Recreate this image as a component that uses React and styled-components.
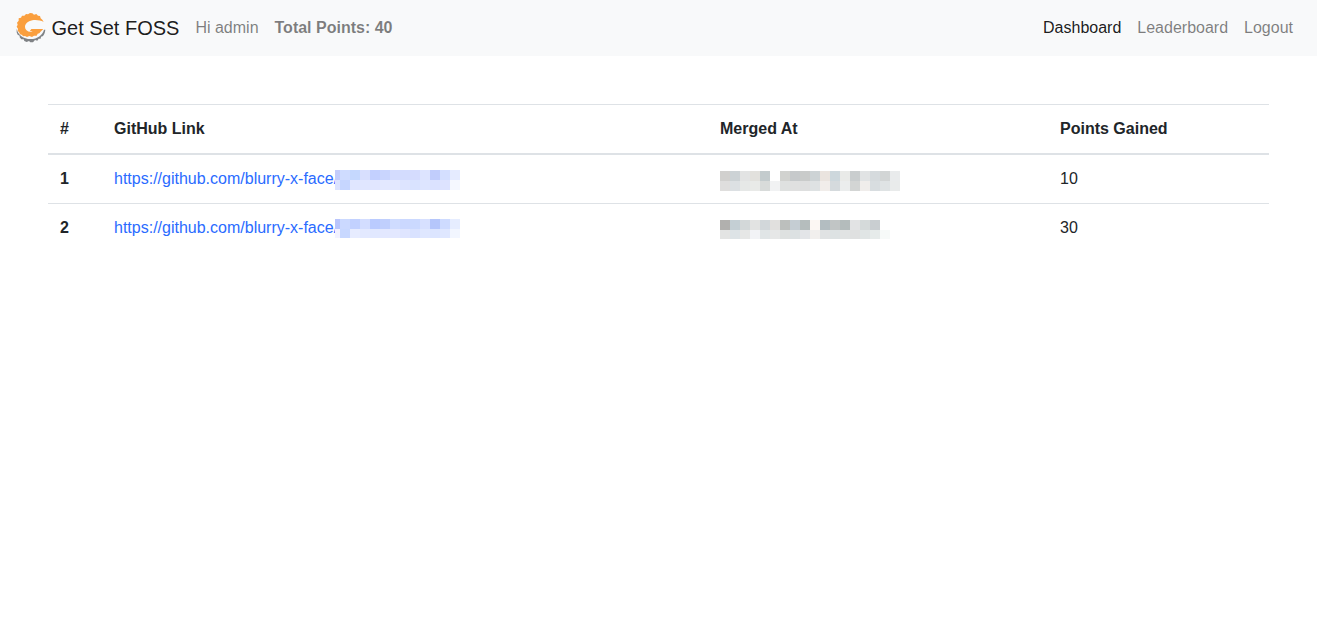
import React from "react";
import styled, { createGlobalStyle } from "styled-components";

const GlobalStyle = createGlobalStyle`
  *, *::before, *::after { box-sizing: border-box; }
  body {
    margin: 0;
    background: #fff;
    color: #212529;
    font-family: "Liberation Sans", Arial, sans-serif;
    font-size: 16px;
    line-height: 24px;
  }
`;

const Navbar = styled.nav`
  display: flex;
  align-items: center;
  gap: 16px;
  padding: 8px 16px;
  background: #f8f9fa;
`;

const Brand = styled.a`
  display: block;
  padding: 5px 0;
  font-size: 20px;
  line-height: 30px;
  color: rgba(0, 0, 0, 0.9);
  text-decoration: none;
  white-space: nowrap;
`;

const LogoMark = styled.svg`
  display: inline-block;
  vertical-align: top;
`;

const Greeting = styled.span`
  color: rgba(0, 0, 0, 0.5);
  font-weight: ${(p) => (p.$strong ? 700 : 400)};
  white-space: nowrap;
`;

const NavList = styled.ul`
  display: flex;
  margin: 0 0 0 auto;
  padding: 0;
  list-style: none;
`;

const NavLink = styled.a`
  display: block;
  padding: 8px;
  color: ${(p) => (p.$active ? "rgba(0, 0, 0, 0.9)" : "rgba(0, 0, 0, 0.5)")};
  text-decoration: none;
`;

const Main = styled.main`
  padding: 48px;
`;

const Table = styled.table`
  width: 100%;
  border-collapse: collapse;
  table-layout: fixed;
`;

const Column = styled.col`
  width: ${(p) => p.$width};
`;

const HeadCell = styled.th`
  padding: 12px;
  border-top: 1px solid #dee2e6;
  border-bottom: 2px solid #dee2e6;
  text-align: left;
`;

const RowHead = styled.th`
  padding: 12px;
  border-top: 1px solid #dee2e6;
  text-align: left;
`;

const Cell = styled.td`
  padding: 12px;
  border-top: 1px solid #dee2e6;
`;

const PullLink = styled.a`
  display: flex;
  align-items: flex-start;
  color: #2a6bff;
  text-decoration: none;
`;

const Mosaic = styled.svg`
  display: block;
  flex: none;
  margin-top: 3px;
  margin-left: ${(p) => (p.$overlap ? "-3px" : "0")};
`;

function Logo() {
  return (
    <LogoMark width="30" height="30" viewBox="0 0 90 90" aria-hidden="true">
      <path
        fill="#7f8285"
        d="M2 47 C6 65 22 78 44 78 C64 78 80 66 84 50 L88 50 C87 60 84 66 80 70 L75 71 L74 77 L68 77 L64 83 L57 81 L51 88 L43 88 L39 84 L32 87 L25 84 L23 79 L16 79 L11 73 L11 68 L5 65 L2 58 Z"
      />
      <path
        fill="#fa9f3e"
        d="M83 27 C74 22 60 20 49 22 C35 25 27 33 27 42 C27 50 33 56 45 57 L50 55 L41 55 L46 48 L82 48 L73 57 L70 61 L65 62 L62 68 L54 68 L48 72 L40 69 L33 72 L27 69 L22 70 L17 65 L12 64 L9 57 L5 54 L6 47 L2 41 L5 35 L3 29 L8 23 L8 16 L15 14 L18 8 L25 8 L30 3 L36 4 L42 0 L49 1 L54 5 L61 3 L66 8 L72 9 L74 16 L79 20 Z"
      />
    </LogoMark>
  );
}

function Redacted({ rows, height = 20, start = 10, overlap = false }) {
  const width = start + (rows[0].length - 1) * 10;
  return (
    <Mosaic
      width={width}
      height={height}
      viewBox={`0 0 ${width} ${height}`}
      shapeRendering="crispEdges"
      aria-hidden="true"
      $overlap={overlap}
    >
      {rows.map((row, y) =>
        row.map((fill, x) =>
          fill ? (
            <rect
              key={`${x}-${y}`}
              x={x === 0 ? 0 : start + (x - 1) * 10}
              y={y * 10}
              width={x === 0 ? start : 10}
              height="10"
              fill={fill}
            />
          ) : null
        )
      )}
    </Mosaic>
  );
}

const pulls = [
  {
    start: 5,
    height: 20,
    link: [
      ["#c3ccfb", "#cfdcff", "#c5d8fe", "#d8dffe", "#c3d0ff", "#c9d5fe", "#d4dcfe", "#d3dcfe", "#d5dcfe", "#dde4ff", "#c1cdfc", "#d4dfff", "#e5ebff"],
      ["#dce3ff", "#c6d6ff", "#e0e6ff", "#e0e6ff", "#e1e6ff", "#e3e8ff", "#e3e8ff", "#dde4ff", "#d9e3ff", "#dde5ff", "#dbe2ff", "#dde3ff", "#f5f8ff"],
    ],
    merged: [
      ["#d1d0ce", "#ccd2d5", "#e2e3e3", "#e2e1dd", "#c3cbcd", "#ffffff", "#d1d2cf", "#c6c9cb", "#c9cbca", "#cdd3d5", "#eae4df", "#cdd7dc", "#e9eae8", "#c9cdce", "#e1e3e4", "#d5dadd", "#d2d5d5", "#e9ebec"],
      ["#dfdedd", "#dce0e3", "#e6e8e7", "#e9eae8", "#d8dbda", "#f1f2f3", "#dfe1e0", "#e0e0e0", "#dedfdf", "#dee2e3", "#f1edea", "#d5dadd", "#ebeded", "#d3d5d4", "#f0edeb", "#d8dde0", "#dfe3e4", "#e9ebeb"],
    ],
    points: 10,
  },
  {
    start: 5,
    height: 19,
    link: [
      ["#b9c5fc", "#cbd9ff", "#c2d1ff", "#d3ddff", "#bacbff", "#c0cffd", "#cfdcff", "#cbd8ff", "#cbd9ff", "#d7e0ff", "#b5c6fb", "#cedbff", "#e6edff"],
      ["#f3f2ff", "#c8d8ff", "#e7ecff", "#e3e9ff", "#e1e8ff", "#e3e8ff", "#e3e8ff", "#dfe5ff", "#d9e2ff", "#dfe7ff", "#dce5ff", "#dfe7ff", "#f2f6ff"],
    ],
    merged: [
      ["#b1b0ae", "#c4cfd4", "#d3d8d9", "#e2e3e2", "#d2d7da", "#e1e0de", "#bcbfbd", "#c5cdd3", "#b5bdbd", "#fcf7f3", "#b3bdc1", "#c1c5c5", "#b4bcbc", "#e2e3e4", "#d5dada", "#c9ced1", null],
      ["#e3e4e3", "#dde3e6", "#e6e7e6", "#f2f3f6", "#e0e5e6", "#e6e7e7", "#dee1e0", "#dce1e2", "#e3e5e8", "#f1efed", "#e0e2e3", "#dde2e3", "#e1e3e3", "#dfe0e0", "#e0e5e5", "#e6ebea", "#f7faf9"],
    ],
    points: 30,
  },
];

export default function App() {
  return (
    <>
      <GlobalStyle />
      <Navbar>
        <Brand href="#">
          <Logo /> Get Set FOSS
        </Brand>
        <Greeting>Hi admin</Greeting>
        <Greeting $strong>Total Points: 40</Greeting>
        <NavList>
          <li><NavLink href="#" $active aria-current="page">Dashboard</NavLink></li>
          <li><NavLink href="#">Leaderboard</NavLink></li>
          <li><NavLink href="#">Logout</NavLink></li>
        </NavList>
      </Navbar>
      <Main>
        <Table>
          <colgroup>
            <Column $width="54px" />
            <Column />
            <Column $width="340px" />
            <Column $width="221px" />
          </colgroup>
          <thead>
            <tr>
              <HeadCell scope="col">#</HeadCell>
              <HeadCell scope="col">GitHub Link</HeadCell>
              <HeadCell scope="col">Merged At</HeadCell>
              <HeadCell scope="col">Points Gained</HeadCell>
            </tr>
          </thead>
          <tbody>
            {pulls.map((pull, i) => (
              <tr key={i}>
                <RowHead scope="row">{i + 1}</RowHead>
                <Cell>
                  <PullLink href="#">
                    https://github.com/blurry-x-face/
                    <Redacted rows={pull.link} start={pull.start} height={pull.height} overlap />
                  </PullLink>
                </Cell>
                <Cell>
                  <Redacted rows={pull.merged} height={pull.height} />
                </Cell>
                <Cell>{pull.points}</Cell>
              </tr>
            ))}
          </tbody>
        </Table>
      </Main>
    </>
  );
}
